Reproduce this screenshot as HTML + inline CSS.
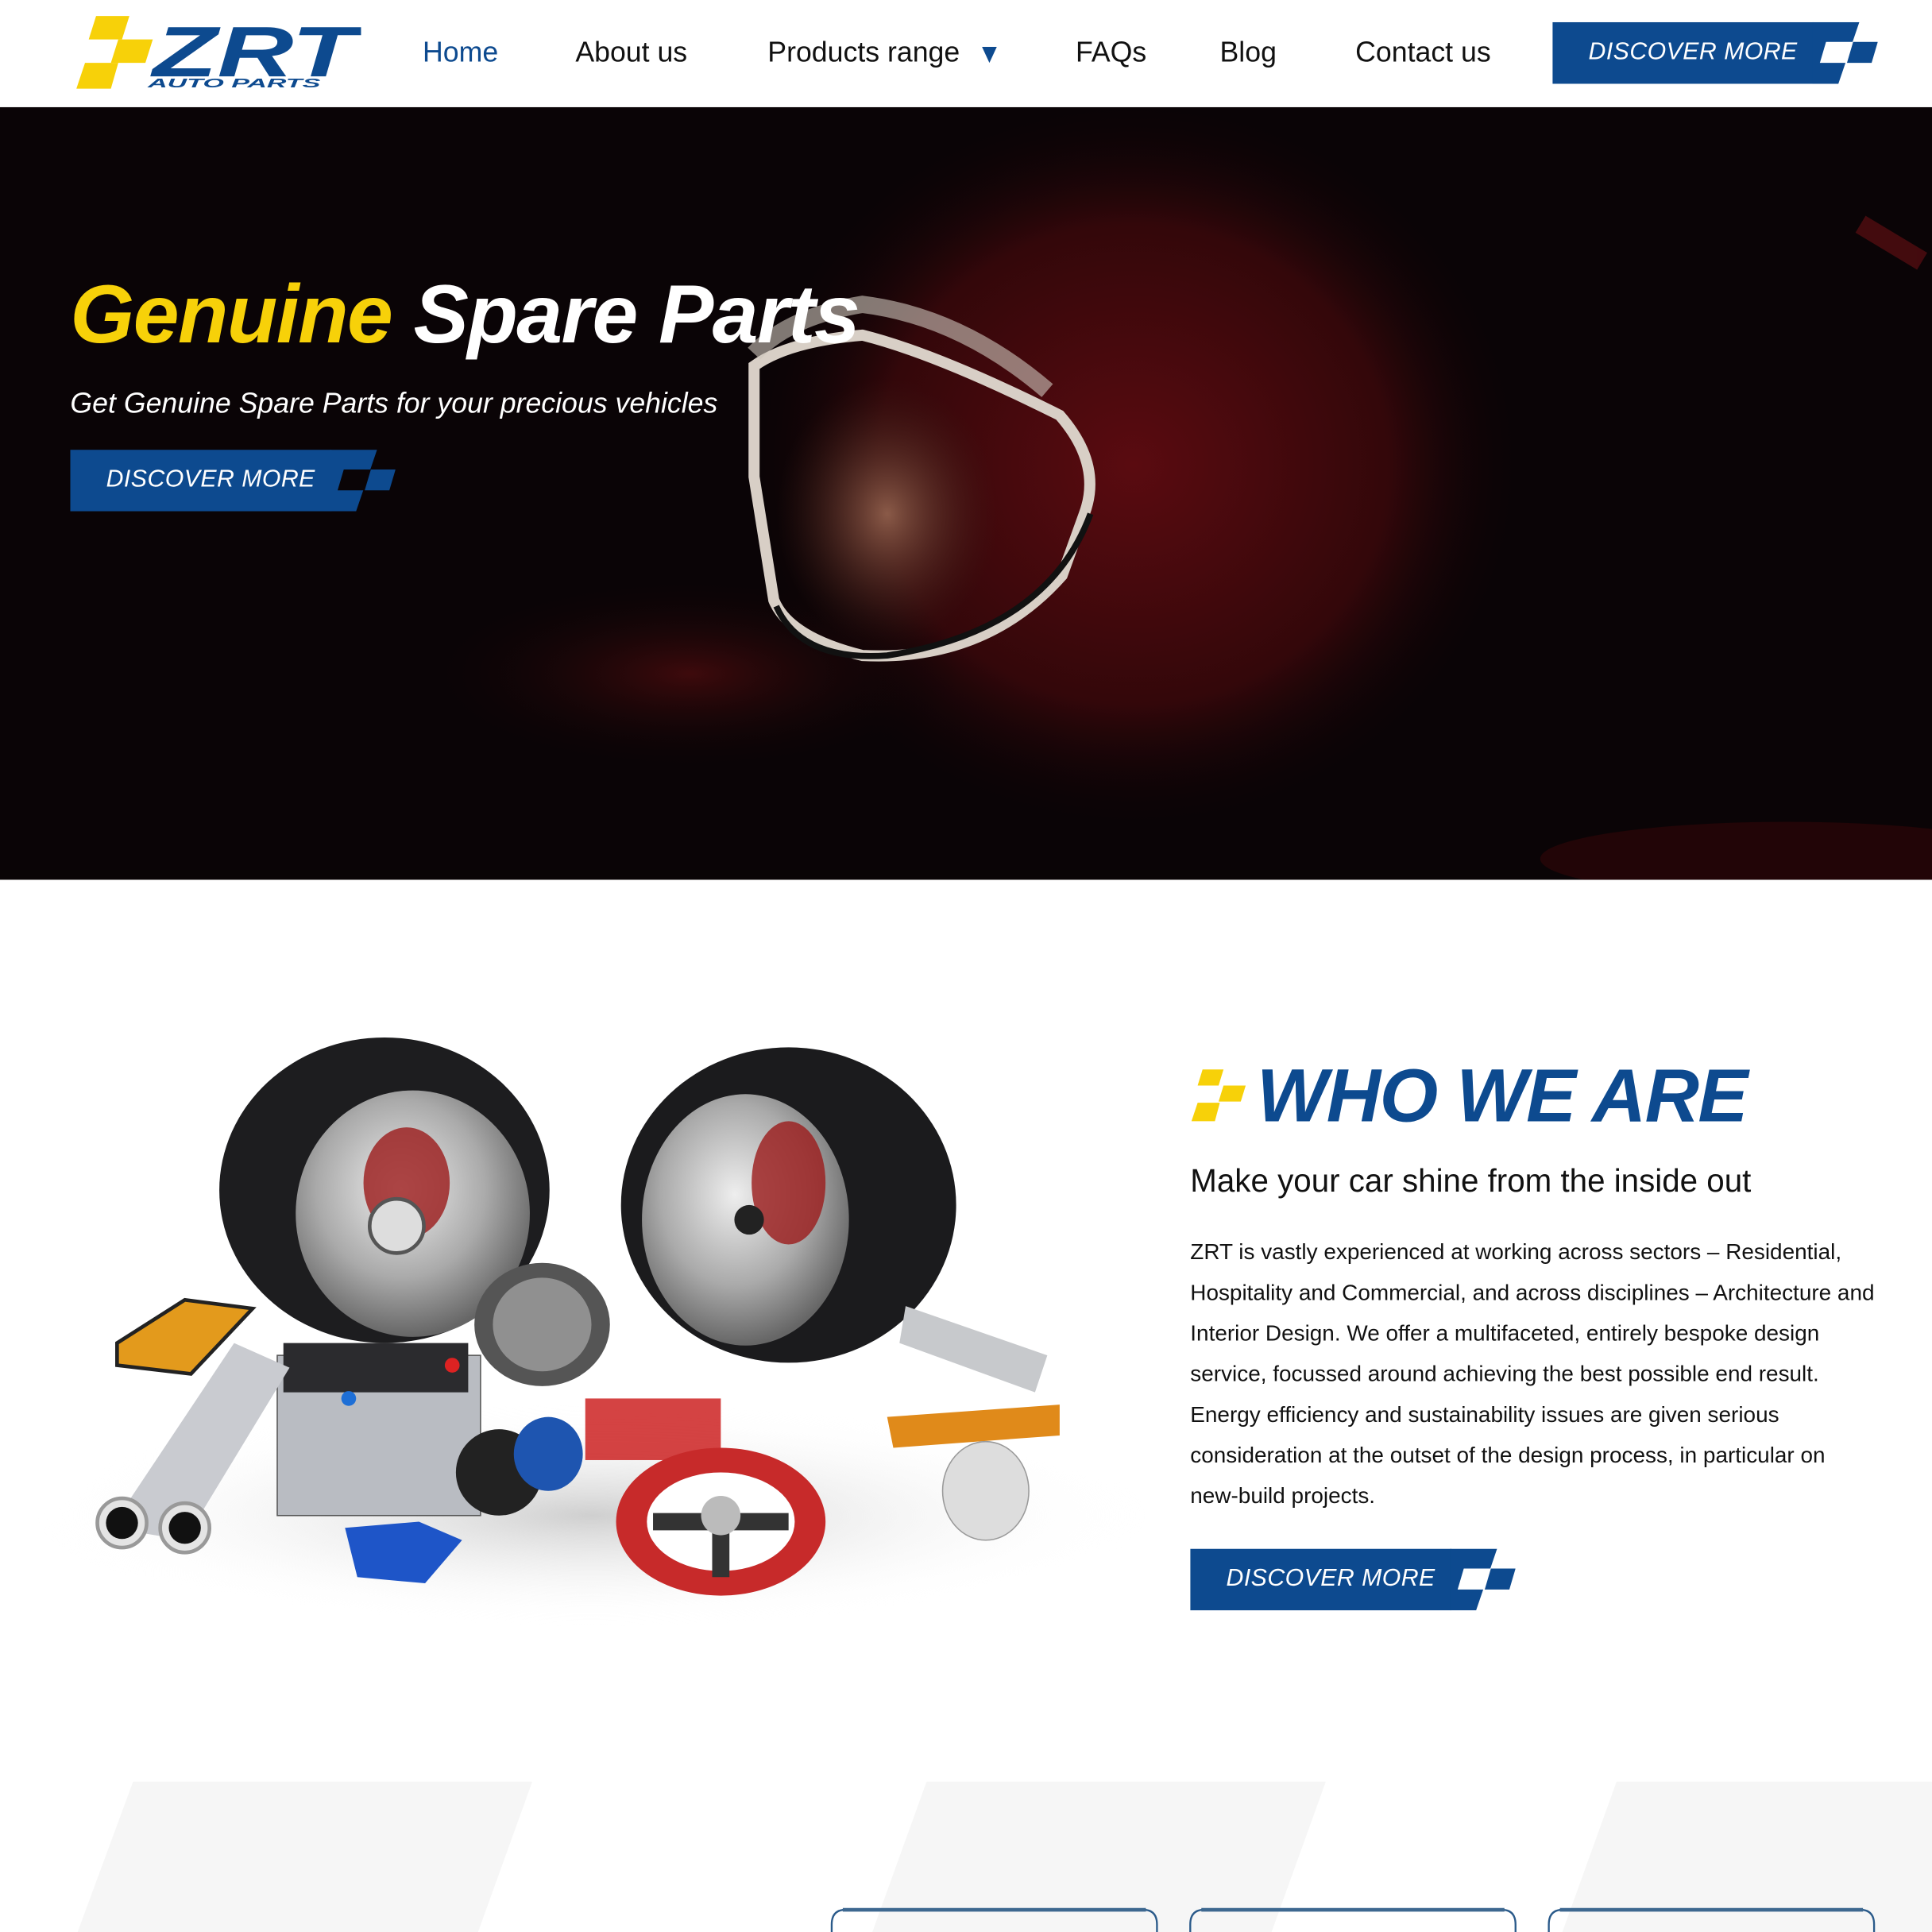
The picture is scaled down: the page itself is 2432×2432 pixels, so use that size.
<!DOCTYPE html>
<html><head><meta charset="utf-8">
<style>
html,body{margin:0;padding:0;width:2432px;height:2432px;overflow:hidden;background:#fff}
#w{position:absolute;left:0;top:0;width:1568px;height:1568px;transform:scale(1.55102);transform-origin:0 0;overflow:hidden;font-family:"Liberation Sans Narrow","Liberation Sans",sans-serif}
.a{position:absolute;white-space:nowrap}
.nav{font-size:23px;color:#111;top:29px}
.btn{position:absolute;width:264px;height:50px}
.btn span{position:absolute;left:14px;width:200px;top:13px;text-align:center;color:#fff;font-style:italic;font-size:19.5px;letter-spacing:.3px}
</style></head><body><div id="w">

<!-- header -->
<svg class="a" style="left:58px;top:10px" width="235" height="66" viewBox="0 0 235 66">
 <polygon points="20,3 47,3 41,22 14,22" fill="#f7d109"/>
 <polygon points="38,22 66,22 60,41 32,41" fill="#f7d109"/>
 <polygon points="11,41 38,41 32,62 4,62" fill="#f7d109"/>
 <text x="66" y="52" font-family="Liberation Sans" font-weight="bold" font-style="italic" font-size="58" fill="#0d4a8f" textLength="165" lengthAdjust="spacingAndGlyphs">ZRT</text>
 <text x="62" y="61" font-family="Liberation Sans" font-weight="bold" font-style="italic" font-size="10" fill="#0d4a8f" textLength="140" lengthAdjust="spacingAndGlyphs">AUTO PARTS</text>
</svg>
<div class="a nav" style="left:343px;color:#0d4a8f">Home</div>
<div class="a nav" style="left:467px">About us</div>
<div class="a nav" style="left:623px">Products range</div>
<div class="a" style="left:797px;top:38px;width:0;height:0;border-left:6px solid transparent;border-right:6px solid transparent;border-top:13px solid #0d4a8f"></div>
<div class="a nav" style="left:873px">FAQs</div>
<div class="a nav" style="left:990px">Blog</div>
<div class="a nav" style="left:1100px">Contact us</div>

<div class="btn" style="left:1260px;top:18px">
 <svg width="264" height="50" style="position:absolute;left:0;top:0"><rect x="0" y="0" width="212" height="50" fill="#0d4a8f"/><polygon points="211,0 249,0 232,50 211,50" fill="#0d4a8f"/><polygon points="222,16 246,16 241,33 217,33" fill="#fff"/><polygon points="244,16 264,16 259,33 239,33" fill="#0d4a8f"/></svg>
 <span>DISCOVER MORE</span>
</div>

<!-- hero -->
<div class="a" style="left:0;top:87px;width:1568px;height:627px;background:#0a0406;overflow:hidden">
 <svg width="1568" height="627" style="position:absolute;left:0;top:0">
  <defs>
   <radialGradient id="g1" cx="0.5" cy="0.5" r="0.5"><stop offset="0" stop-color="#5a0b10"/><stop offset="0.65" stop-color="#33070a"/><stop offset="1" stop-color="#0a0406" stop-opacity="0"/></radialGradient>
   <radialGradient id="g2" cx="0.5" cy="0.5" r="0.5"><stop offset="0" stop-color="#8a5a48"/><stop offset="1" stop-color="#3a1a14" stop-opacity="0"/></radialGradient>
   <radialGradient id="g3" cx="0.5" cy="0.5" r="0.5"><stop offset="0" stop-color="#3e0a0c"/><stop offset="1" stop-color="#0a0406" stop-opacity="0"/></radialGradient>
  </defs>
  <ellipse cx="920" cy="290" rx="320" ry="300" fill="url(#g1)"/>
  <ellipse cx="560" cy="460" rx="220" ry="80" fill="url(#g3)"/>
  <ellipse cx="720" cy="330" rx="90" ry="110" fill="url(#g2)"/>
  <path d="M612 210 Q640 190 700 185 Q760 200 860 250 Q895 290 880 330 L862 380 Q800 450 700 445 Q640 430 628 400 L612 300 Z" fill="none" stroke="#d8cfc6" stroke-width="9"/>
  <path d="M612 200 Q640 170 700 160 Q780 170 850 230" fill="none" stroke="#cfc6bc" stroke-width="14" opacity=".6"/>
  <path d="M630 405 Q650 450 720 445 Q850 425 885 330" fill="none" stroke="#111" stroke-width="5"/>
  <path d="M1510 95 L1560 125" stroke="#6a1014" stroke-width="16" opacity=".6"/>
  <ellipse cx="1450" cy="610" rx="200" ry="30" fill="#3a0608" opacity=".5"/>
 </svg>
 <div class="a" style="left:57px;top:130px;font-family:'Liberation Sans',sans-serif;font-weight:bold;font-style:italic;font-size:67px;color:#fff;letter-spacing:-1px"><span style="color:#f7d109">Genuine</span> Spare Parts</div>
 <div class="a" style="left:57px;top:227px;font-style:italic;font-size:23px;color:#fff">Get Genuine Spare Parts for your precious vehicles</div>
 <div class="btn" style="left:57px;top:278px">
  <svg width="264" height="50" style="position:absolute;left:0;top:0"><rect x="0" y="0" width="212" height="50" fill="#0d4a8f"/><polygon points="211,0 249,0 232,50 211,50" fill="#0d4a8f"/><polygon points="222,16 246,16 241,33 217,33" fill="#0a0406"/><polygon points="244,16 264,16 259,33 239,33" fill="#0d4a8f"/></svg>
  <span>DISCOVER MORE</span>
 </div>
</div>

<!-- parts image -->
<svg class="a" style="left:0;top:820px" width="940" height="500" viewBox="0 820 940 500">
 <defs><radialGradient id="sh" cx=".5" cy=".5" r=".5"><stop offset="0" stop-color="#cfcfcf"/><stop offset="1" stop-color="#fff" stop-opacity="0"/></radialGradient>
 <radialGradient id="rim" cx=".45" cy=".4" r=".6"><stop offset="0" stop-color="#eee"/><stop offset=".6" stop-color="#aaa"/><stop offset="1" stop-color="#666"/></radialGradient></defs>
 <ellipse cx="480" cy="1230" rx="450" ry="90" fill="url(#sh)"/>
 <ellipse cx="312" cy="966" rx="134" ry="124" fill="#1d1d1f"/>
 <ellipse cx="335" cy="985" rx="95" ry="100" fill="url(#rim)"/>
 <ellipse cx="330" cy="960" rx="35" ry="45" fill="#9b1a1a" opacity=".8"/>
 <circle cx="322" cy="995" r="22" fill="#ddd" stroke="#555" stroke-width="3"/>
 <ellipse cx="640" cy="978" rx="136" ry="128" fill="#1b1b1d"/>
 <ellipse cx="605" cy="990" rx="84" ry="102" fill="url(#rim)"/>
 <ellipse cx="640" cy="960" rx="30" ry="50" fill="#9b1a1a" opacity=".8"/>
 <circle cx="608" cy="990" r="12" fill="#222"/>
 <polygon points="95,1090 150,1055 205,1062 155,1115 95,1108" fill="#e39a1c" stroke="#222" stroke-width="3"/>
 <rect x="225" y="1100" width="165" height="130" fill="#b9bcc2" stroke="#555"/>
 <rect x="230" y="1090" width="150" height="40" fill="#2b2b2e"/>
 <circle cx="283" cy="1135" r="6" fill="#1e6fd6"/><circle cx="367" cy="1108" r="6" fill="#d22"/>
 <path d="M90 1240 L190 1090 L235 1110 L150 1250 Z" fill="#c9cbd0"/>
 <circle cx="99" cy="1236" r="20" fill="#e4e4e4" stroke="#999" stroke-width="3"/><circle cx="99" cy="1236" r="13" fill="#111"/>
 <circle cx="150" cy="1240" r="20" fill="#e4e4e4" stroke="#999" stroke-width="3"/><circle cx="150" cy="1240" r="13" fill="#111"/>
 <ellipse cx="440" cy="1075" rx="55" ry="50" fill="#555"/>
 <ellipse cx="440" cy="1075" rx="40" ry="38" fill="#ccc" opacity=".5"/>
 <rect x="475" y="1135" width="110" height="50" fill="#c22" opacity=".85"/>
 <ellipse cx="405" cy="1195" rx="35" ry="35" fill="#222"/>
 <ellipse cx="445" cy="1180" rx="28" ry="30" fill="#1e55b0"/>
 <ellipse cx="585" cy="1235" rx="85" ry="60" fill="#c72a2a"/>
 <ellipse cx="585" cy="1235" rx="60" ry="40" fill="#fff"/>
 <path d="M530 1235 L640 1235 M585 1235 L585 1280" stroke="#333" stroke-width="14"/>
 <circle cx="585" cy="1230" r="16" fill="#bbb"/>
 <path d="M280 1240 L340 1235 L375 1250 L345 1285 L290 1280 Z" fill="#1e55c8"/>
 <path d="M720 1150 L860 1140 L860 1165 L725 1175 Z" fill="#e08a1a"/>
 <ellipse cx="800" cy="1210" rx="35" ry="40" fill="#ddd" stroke="#999"/>
 <path d="M735 1060 L850 1100 L840 1130 L730 1090 Z" fill="#c7c9cc"/>
</svg>

<!-- who we are -->
<svg class="a" style="left:964px;top:866px" width="50" height="46"><polygon points="12,2 29,2 25,15 8,15" fill="#f7d109"/><polygon points="29,15 47,15 43,28 25,28" fill="#f7d109"/><polygon points="8,29 26,29 22,44 3,44" fill="#f7d109"/></svg>
<div class="a" style="left:1020px;top:854px;font-family:'Liberation Sans',sans-serif;font-weight:bold;font-style:italic;font-size:61px;color:#0d4a8f;letter-spacing:-1px">WHO WE ARE</div>
<div class="a" style="left:966px;top:943px;font-size:26px;color:#111">Make your car shine from the inside out</div>
<div class="a" style="left:966px;top:1000px;width:580px;white-space:normal;font-size:18px;line-height:33px;color:#111">ZRT is vastly experienced at working across sectors – Residential,<br>Hospitality and Commercial, and across disciplines – Architecture and<br>Interior Design. We offer a multifaceted, entirely bespoke design<br>service, focussed around achieving the best possible end result.<br>Energy efficiency and sustainability issues are given serious<br>consideration at the outset of the design process, in particular on<br>new-build projects.</div>
<div class="btn" style="left:966px;top:1257px">
 <svg width="264" height="50" style="position:absolute;left:0;top:0"><rect x="0" y="0" width="212" height="50" fill="#0d4a8f"/><polygon points="211,0 249,0 232,50 211,50" fill="#0d4a8f"/><polygon points="222,16 246,16 241,33 217,33" fill="#fff"/><polygon points="244,16 264,16 259,33 239,33" fill="#0d4a8f"/></svg>
 <span>DISCOVER MORE</span>
</div>

<!-- bottom -->
<svg class="a" style="left:0;top:1440px" width="1568" height="128">
 <polygon points="108,6 432,6 388,128 63,128" fill="#f6f6f6"/>
 <polygon points="752,6 1076,6 1032,128 708,128" fill="#f6f6f6"/>
 <polygon points="1312,6 1568,6 1568,128 1268,128" fill="#f6f6f6"/>
 <path d="M675 130 L675 122 Q675 110 686 110 L928 110 Q939 110 939 122 L939 130" fill="none" stroke="#2a5a8a" stroke-width="1.5"/>
 <path d="M966 130 L966 122 Q966 110 977 110 L1219 110 Q1230 110 1230 122 L1230 130" fill="none" stroke="#2a5a8a" stroke-width="1.5"/>
 <path d="M1257 130 L1257 122 Q1257 110 1268 110 L1510 110 Q1521 110 1521 122 L1521 130" fill="none" stroke="#2a5a8a" stroke-width="1.5"/>
 <path d="M684 110 L930 110 M975 110 L1221 110 M1266 110 L1512 110" stroke="#3e6890" stroke-width="3"/>
</svg>
</div></body></html>
